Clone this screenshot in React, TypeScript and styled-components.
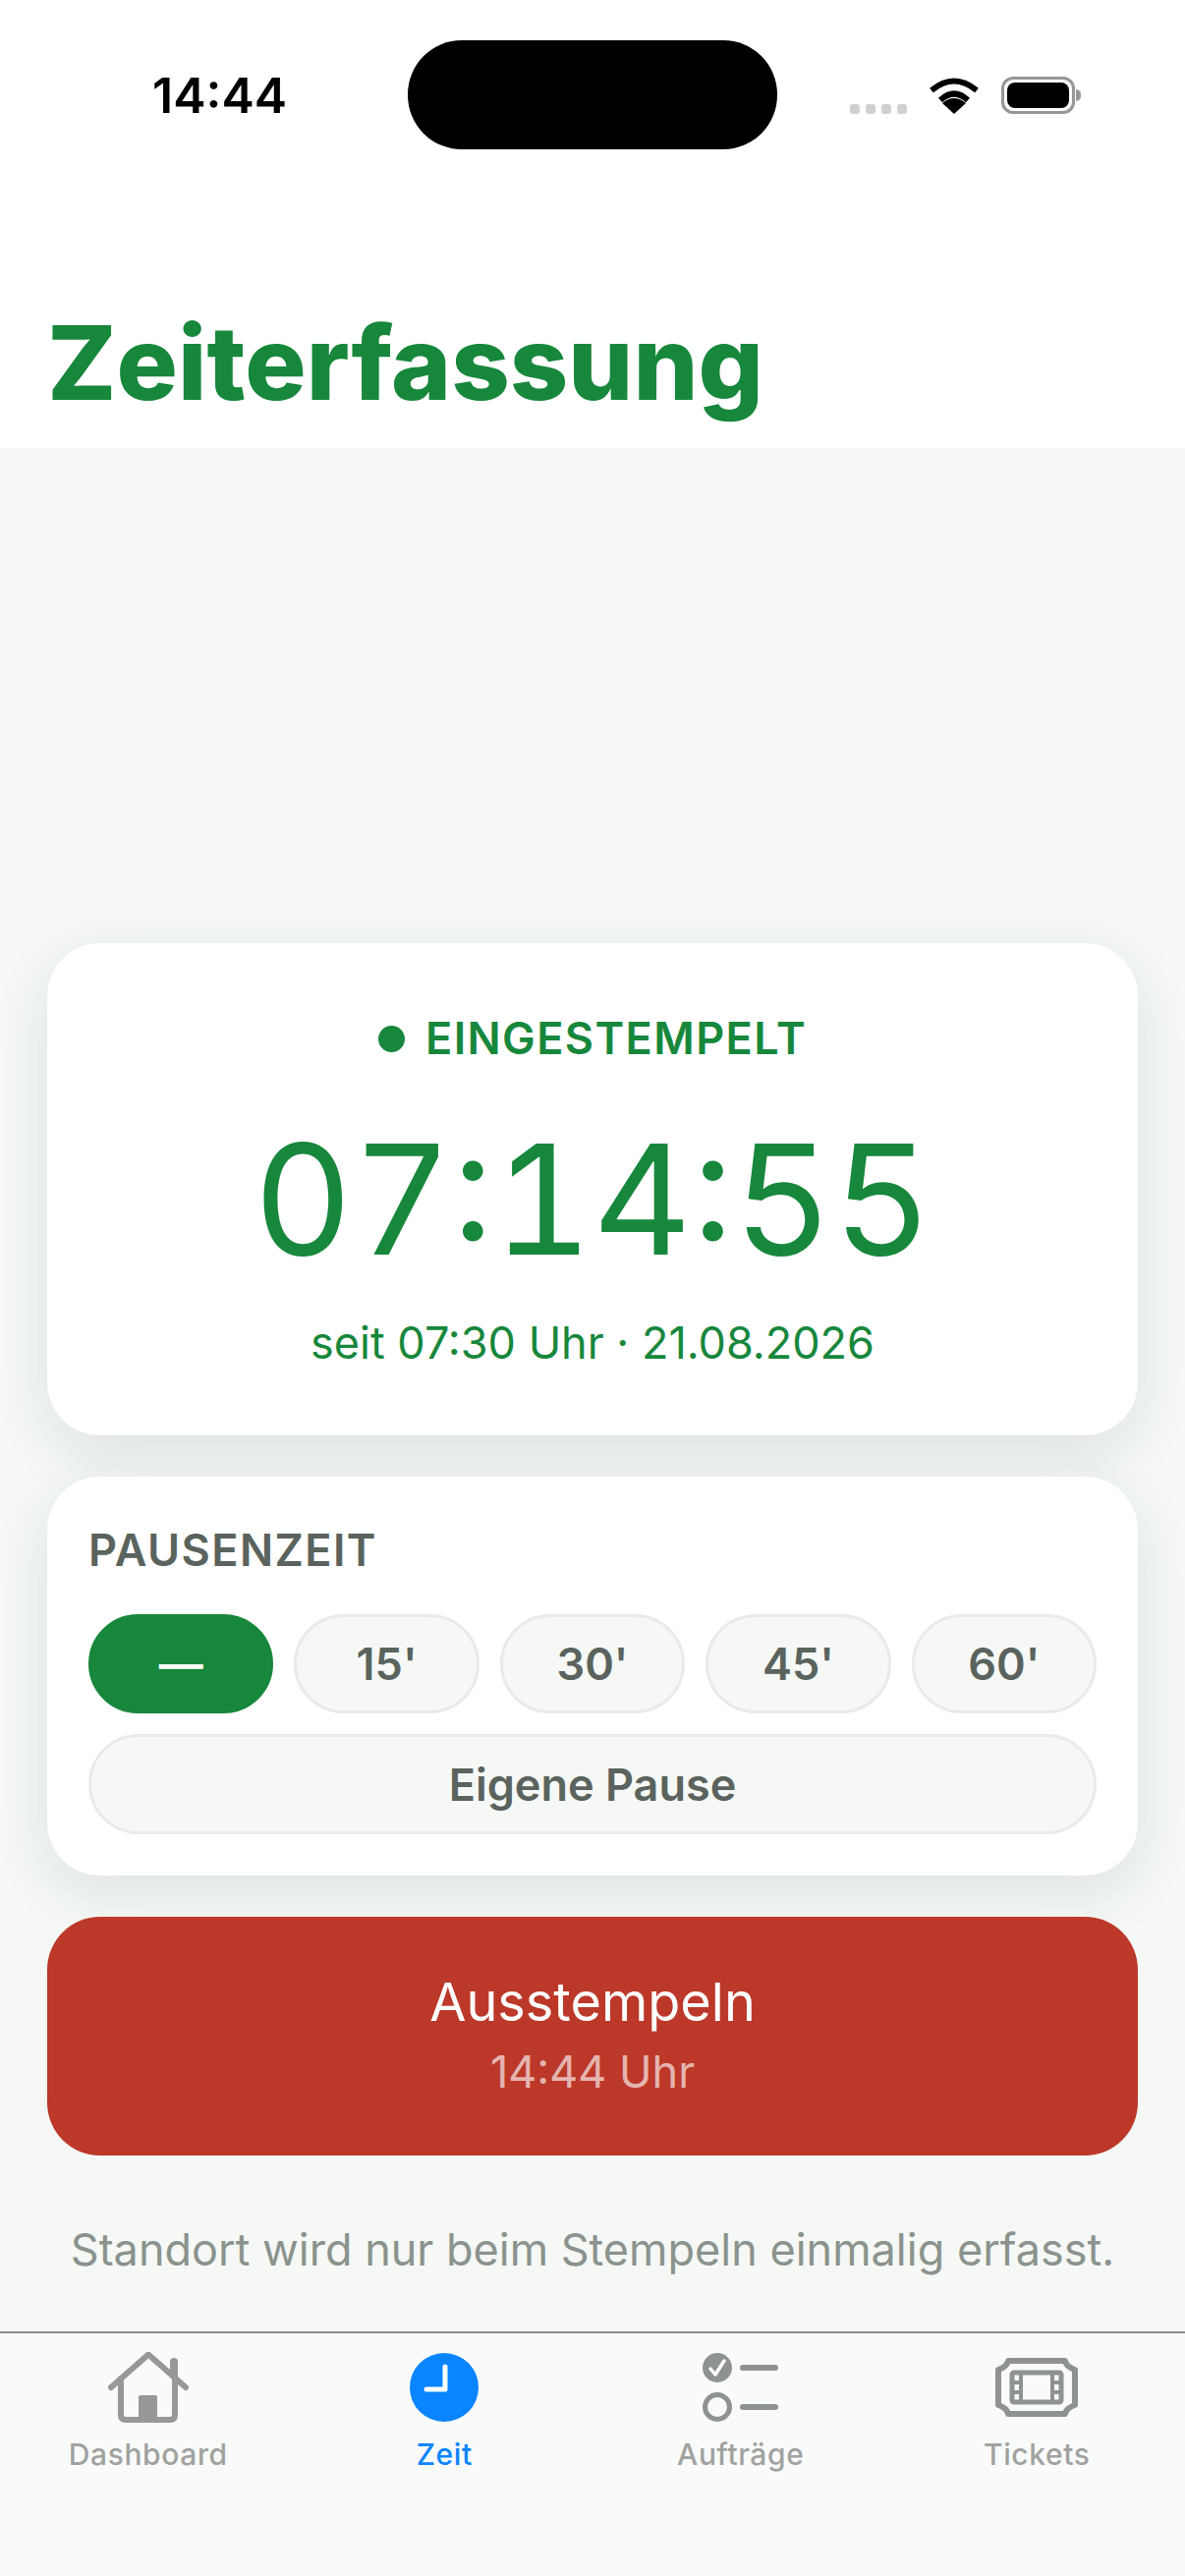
import { createGlobalStyle, styled } from "styled-components";

const GREEN = "#17873c";
const PAGE_BG = "#f5f8f5";
const BREAKS = ["—", "15'", "30'", "45'", "60'"];

const GlobalStyle = createGlobalStyle`
  html, body {
    margin: 0;
    padding: 0;
    background: ${PAGE_BG};
  }
  * {
    box-sizing: border-box;
  }
`;

function HouseIcon() {
  return (
    <svg width="84" height="72" viewBox="0 0 84 72" fill="none" stroke="#979997" strokeWidth="6" strokeLinecap="round" strokeLinejoin="round">
      <path d="M4 36 L42 2.5 L80 36" />
      <path d="M14 27 V64 Q14 69 19 69 H64 Q69 69 69 64 V27" />
      <path d="M68 24 V10" strokeWidth="8" />
      <rect x="32" y="44" width="19" height="25" rx="2" fill="#979997" stroke="none" />
    </svg>
  );
}

function ClockIcon() {
  return (
    <svg width="84" height="72" viewBox="0 0 84 72" fill="none">
      <circle cx="42" cy="36" r="35" fill="#0a84ff" />
      <path d="M43 15 V38 H24" stroke="#fff" strokeWidth="5" strokeLinecap="round" strokeLinejoin="round" />
    </svg>
  );
}

function ListIcon() {
  return (
    <svg width="84" height="72" viewBox="0 0 84 72" fill="none">
      <circle cx="18" cy="16" r="15" fill="#8f938f" />
      <path d="M11 17 L16 23 L25 9" stroke="#fff" strokeWidth="3.5" strokeLinecap="round" strokeLinejoin="round" />
      <circle cx="18" cy="56" r="12.5" stroke="#8f938f" strokeWidth="5" />
      <path d="M44 16 H77 M44 56 H77" stroke="#8f938f" strokeWidth="6" strokeLinecap="round" />
    </svg>
  );
}

function TicketIcon() {
  return (
    <svg width="84" height="72" viewBox="0 0 84 72" fill="none" stroke="#8f938f">
      <path d="M13 9 H71 Q72 15 81 18 V54 Q72 57 71 63 H13 Q12 57 3 54 V18 Q12 15 13 9 Z" strokeWidth="6" strokeLinejoin="round" />
      <rect x="17" y="21" width="50" height="30" rx="2" strokeWidth="5" />
      <path d="M26 21 V51 M58 21 V51" strokeWidth="4" />
      <path d="M17 31 H26 M17 41 H26 M58 31 H67 M58 41 H67" strokeWidth="4" />
    </svg>
  );
}

function WifiIcon() {
  return (
    <svg width="52" height="38" viewBox="0 0 52 38" fill="none" stroke="#000" strokeWidth="6">
      <path d="M3 14 Q26 -5 49 14" />
      <path d="M12 24 Q26 11 40 24" />
      <path d="M14 27 L26 38 L38 27 Q26 17 14 27 Z" fill="#000" stroke="none" />
    </svg>
  );
}

export default function App() {
  return (
    <Screen>
      <GlobalStyle />
      <Header>
        <StatusBar>
          <Clock>14:44</Clock>
          <Island />
          <StatusIcons>
            <SignalDots>
              <i />
              <i />
              <i />
              <i />
            </SignalDots>
            <WifiIcon />
            <Battery />
          </StatusIcons>
        </StatusBar>
        <Title>Zeiterfassung</Title>
      </Header>

      <Main>
        <TimerCard>
          <StateRow>
            <StateDot />
            EINGESTEMPELT
          </StateRow>
          <Timer>07:14:55</Timer>
          <Since>seit 07:30 Uhr · 21.08.2026</Since>
        </TimerCard>

        <BreakCard>
          <BreakLabel>PAUSENZEIT</BreakLabel>
          <BreakGrid>
            {BREAKS.map((label, i) => (
              <BreakPill key={label} $active={i === 0}>
                {label}
              </BreakPill>
            ))}
            <CustomPill>Eigene Pause</CustomPill>
          </BreakGrid>
        </BreakCard>

        <ClockOut>
          <ClockOutTitle>Ausstempeln</ClockOutTitle>
          <ClockOutTime>14:44 Uhr</ClockOutTime>
        </ClockOut>

        <Hint>Standort wird nur beim Stempeln einmalig erfasst.</Hint>
      </Main>

      <TabBar>
        <Tab>
          <HouseIcon />
          <TabLabel>Dashboard</TabLabel>
        </Tab>
        <Tab>
          <ClockIcon />
          <TabLabel $active>Zeit</TabLabel>
        </Tab>
        <Tab>
          <ListIcon />
          <TabLabel>Aufträge</TabLabel>
        </Tab>
        <Tab>
          <TicketIcon />
          <TabLabel>Tickets</TabLabel>
        </Tab>
      </TabBar>
    </Screen>
  );
}

const Screen = styled.div`
  width: 1206px;
  height: 2622px;
  display: flex;
  flex-direction: column;
  overflow: hidden;
  background: ${PAGE_BG};
  font-family: Inter, "Liberation Sans", sans-serif;
`;

const Header = styled.header`
  height: 456px;
  background: #fff;
  flex-shrink: 0;
`;

const StatusBar = styled.div`
  display: grid;
  grid-template-columns: 415px 376px 1fr;
  padding-top: 41px;
  height: 152px;
`;

const Clock = styled.div`
  padding-left: 155px;
  font-size: 50px;
  line-height: 58px;
  margin-top: 27px;
  font-weight: 600;
  color: #000;
`;

const Island = styled.div`
  height: 111px;
  background: #000;
  border-radius: 55px;
`;

const StatusIcons = styled.div`
  display: flex;
  align-items: flex-start;
  padding: 37px 0 0 74px;
`;

const SignalDots = styled.div`
  display: flex;
  gap: 6px;
  margin: 28px 22px 0 0;

  i {
    width: 10px;
    height: 10px;
    border-radius: 3px;
    background: #d0d0d0;
  }
`;

const Battery = styled.div`
  position: relative;
  width: 75px;
  height: 38px;
  margin-left: 22px;
  border: 3px solid #979797;
  border-radius: 12px;

  &::before {
    content: "";
    position: absolute;
    inset: 3px;
    border-radius: 8px;
    background: #000;
  }

  &::after {
    content: "";
    position: absolute;
    right: -9px;
    top: 10px;
    width: 5px;
    height: 12px;
    border-radius: 0 6px 6px 0;
    background: #979797;
  }
`;

const Title = styled.h1`
  margin: 155px 0 0 48px;
  font-size: 104px;
  line-height: 124px;
  font-weight: 800;
  color: ${GREEN};
`;

const Main = styled.main`
  flex: 1;
  display: flex;
  flex-direction: column;
  justify-content: flex-end;
  padding: 0 48px 56px;
`;

const TimerCard = styled.section`
  height: 501px;
  background: #fff;
  border-radius: 54px;
  box-shadow: 0 18px 60px rgba(20, 60, 40, 0.1);
  display: flex;
  flex-direction: column;
  align-items: center;
  padding-top: 70px;
`;

const StateRow = styled.div`
  display: flex;
  align-items: center;
  gap: 21px;
  font-size: 45px;
  line-height: 54px;
  font-weight: 600;
  letter-spacing: 1.4px;
  color: ${GREEN};
`;

const StateDot = styled.span`
  width: 27px;
  height: 27px;
  border-radius: 50%;
  background: ${GREEN};
`;

const Timer = styled.div`
  margin-top: 42px;
  font-size: 156px;
  line-height: 190px;
  font-weight: 400;
  font-variant-numeric: tabular-nums;
  color: ${GREEN};
`;

const Since = styled.div`
  margin-top: 24px;
  font-size: 45px;
  line-height: 54px;
  color: ${GREEN};
`;

const BreakCard = styled.section`
  margin-top: 42px;
  padding: 50px 42px 42px;
  background: #fff;
  border-radius: 54px;
  box-shadow: 0 18px 60px rgba(20, 60, 40, 0.1);
`;

const BreakLabel = styled.div`
  font-size: 45px;
  line-height: 50px;
  font-weight: 600;
  letter-spacing: 1.4px;
  color: #5a635d;
`;

const BreakGrid = styled.div`
  display: grid;
  grid-template-columns: repeat(5, 1fr);
  gap: 21px;
  margin-top: 40px;
`;

const BreakPill = styled.div<{ $active?: boolean }>`
  height: 101px;
  display: flex;
  align-items: center;
  justify-content: center;
  border-radius: 51px;
  font-size: 45px;
  font-weight: 600;
  background: ${(p) => (p.$active ? GREEN : PAGE_BG)};
  color: ${(p) => (p.$active ? "#fff" : "#5a635d")};
  border: 3px solid ${(p) => (p.$active ? GREEN : "#e8ebe8")};
`;

const CustomPill = styled(BreakPill)`
  grid-column: 1 / -1;
  height: 102px;
`;

const ClockOut = styled.button`
  margin-top: 42px;
  height: 243px;
  border: none;
  border-radius: 54px;
  background: #bc3829;
  display: flex;
  flex-direction: column;
  align-items: center;
  justify-content: center;
  padding-bottom: 6px;
  font-family: inherit;
`;

const ClockOutTitle = styled.span`
  font-size: 54px;
  line-height: 66px;
  font-weight: 400;
  color: #fff;
`;

const ClockOutTime = styled.span`
  margin-top: 11px;
  font-size: 45px;
  line-height: 54px;
  color: rgba(255, 255, 255, 0.65);
`;

const Hint = styled.p`
  margin: 69px 0 0;
  font-size: 45px;
  line-height: 54px;
  text-align: center;
  color: #8a938d;
`;

const TabBar = styled.nav`
  height: 249px;
  flex-shrink: 0;
  display: grid;
  grid-template-columns: repeat(4, 1fr);
  border-top: 2px solid #8a8a8a;
  background: #f9fbfa;
  padding-top: 19px;
`;

const Tab = styled.div`
  display: flex;
  flex-direction: column;
  align-items: center;
`;

const TabLabel = styled.span<{ $active?: boolean }>`
  margin-top: 13px;
  font-size: 30px;
  line-height: 38px;
  font-weight: 500;
  letter-spacing: 0.6px;
  color: ${(p) => (p.$active ? "#0a84ff" : "#a0a2a0")};
`;
